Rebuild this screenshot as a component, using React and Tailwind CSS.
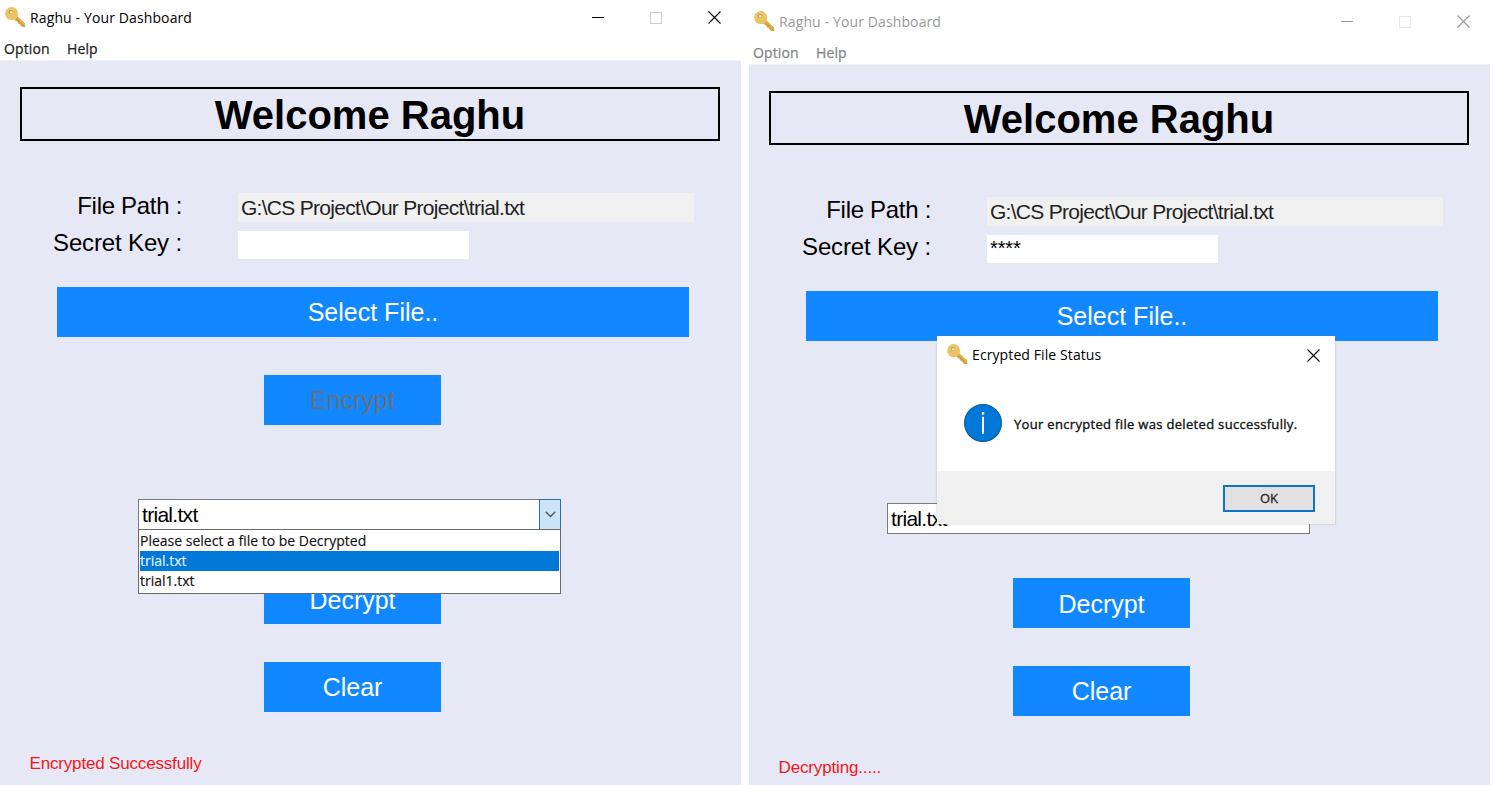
const UI = "font-['Open_Sans','Noto_Sans',sans-serif]";

function KeyIcon() {
  return (
    <svg className="block h-[21px] w-[21px] shrink-0" viewBox="0 0 21 21">
      <path d="M8.6 11.8 L11.8 8.8 L20.2 16.6 V20 H17.2 L15.4 18.4 V17.2 H14 L12.6 15.8 V14.6 H11.2 Z" fill="#deb04a" />
      <path d="M10.4 11 L19.8 19.8" stroke="#b98f3a" strokeWidth="1" />
      <circle cx="6.6" cy="6.6" r="6.5" fill="#ecc562" />
      <circle cx="5.9" cy="4.9" r="2" fill="#b8985a" />
      <circle cx="6.2" cy="5.3" r="1.2" fill="#f6f0dc" />
    </svg>
  );
}

function CloseIcon() {
  return (
    <svg className="block h-[13px] w-[13px]" viewBox="0 0 13 13">
      <path d="M0.5 0.5 L12.5 12.5 M12.5 0.5 L0.5 12.5" stroke="currentColor" strokeWidth="1.1" />
    </svg>
  );
}

function InfoIcon() {
  return (
    <svg className="block h-[38px] w-[38px] shrink-0" viewBox="0 0 38 38">
      <circle cx="19" cy="19" r="18.4" fill="#0078d7" stroke="#0b5ca8" strokeWidth="1.2" />
      <rect x="17.8" y="8" width="2.4" height="2.6" fill="#fff" />
      <rect x="18" y="12.8" width="2" height="17" fill="#fff" />
    </svg>
  );
}

function BlueButton({ children, className = "", disabled = false }) {
  return (
    <button
      type="button"
      className={`flex h-[50px] items-center justify-center bg-[#1188ff] text-[25px] leading-none ${disabled ? "text-[#68707c]" : "text-white"} ${className}`}
    >
      {children}
    </button>
  );
}

function Window({ active, secret, status, statusClass, children, className }) {
  return (
    <section className={`flex w-[741px] shrink-0 flex-col ${className}`}>
      <header className={`flex h-[36px] items-center pl-[5px] ${UI} ${active ? "text-black" : "text-[#999]"}`}>
        <div className="-mt-[2px]"><KeyIcon /></div>
        <h2 className="-mt-[2px] ml-[4px] flex-1 whitespace-nowrap text-[14px] tracking-[0.12px]">Raghu - Your Dashboard</h2>
        <div className="flex items-center pr-[20px]">
          <span className="-mt-px h-px w-[12px] bg-current" />
          <span className={`ml-[46px] h-[12px] w-[12px] border ${active ? "border-[#ccc]" : "border-[#e8e8e8]"}`} />
          <span className="-mt-px ml-[46px]"><CloseIcon /></span>
        </div>
      </header>
      <nav className={`flex h-[25px] items-center gap-[17.5px] border-b border-[#f0f0f2] pt-px pl-[4px] text-[14px] tracking-[0.1px] [-webkit-text-stroke:0.25px_currentColor] ${UI} ${active ? "text-[#222]" : "text-[#858585]"}`}>
        <span>Option</span>
        <span>Help</span>
      </nav>
      <main className="flex flex-1 flex-col bg-[#e6e8f5] pt-[26px] font-['Liberation_Sans',Arial,sans-serif]">
        <h1 className="mx-[20px] flex h-[54px] w-[700px] items-center justify-center border-2 border-black pt-px text-[40px] leading-none font-bold">
          Welcome Raghu
        </h1>
        <div className="mt-[52px] flex h-[29px]">
          <label className="w-[182px] text-right text-[24px] leading-[25px] tracking-[-0.3px]">File Path :</label>
          <div className="ml-[56px] flex w-[456px] items-center bg-[#f0f0f0] pl-[3px] text-[21px] leading-none tracking-[-0.71px] text-[#222]">
            G:\CS Project\Our Project\trial.txt
          </div>
        </div>
        <div className="mt-[9px] flex h-[28px]">
          <label className="w-[182px] text-right text-[24px] leading-[24px] tracking-[-0.15px]">Secret Key :</label>
          <div className="ml-[56px] w-[231px] bg-white pl-[3px] text-[20px] leading-[26px] tracking-[-0.1px]">{secret}</div>
        </div>
        <BlueButton className="mt-[28px] ml-[57px] w-[632px]">Select File..</BlueButton>
        <div className="mt-[37px] ml-[264px] h-[51px] pt-px">
          {active && <BlueButton className="w-[177px]" disabled>Encrypt</BlueButton>}
        </div>
        <div className="relative mt-[74px] ml-[138px] flex h-[31px] w-[423px] border border-[#7a7a7a] bg-white">
          <span className="flex-1 pl-[3px] text-[21px] leading-[30px] tracking-[-0.7px]">trial.txt</span>
          {children}
        </div>
        <BlueButton className="mt-[44px] ml-[264px] w-[177px] pt-[2px]">Decrypt</BlueButton>
        <BlueButton className="mt-[38px] ml-[264px] w-[177px]">Clear</BlueButton>
        <p className={`mt-[42px] ml-[29.5px] text-[17px] leading-[20px] text-[#f01820] ${statusClass}`}>{status}</p>
      </main>
    </section>
  );
}

function FileMenu() {
  return (
    <>
      <span className="-my-px -mr-px flex w-[22px] items-center justify-center border border-[#2a6da8] bg-[#cce4f7]">
        <svg className="h-[7px] w-[11px]" viewBox="0 0 11 7">
          <path d="M0.7 0.8 L5.5 5.6 L10.3 0.8" fill="none" stroke="#555" strokeWidth="1.4" />
        </svg>
      </span>
      <ul className={`absolute top-[29px] -left-px w-[423px] border border-[#6a6a6a] bg-white px-px pt-px pb-[2px] text-[14px] leading-[20px] text-[#111] [-webkit-text-stroke:0.15px_currentColor] ${UI}`}>
        <li>Please select a file to be Decrypted</li>
        <li className="bg-[#0078d7] text-[#e4f1ff]">trial.txt</li>
        <li>trial1.txt</li>
      </ul>
    </>
  );
}

function StatusDialog() {
  return (
    <div className={`absolute top-[336px] left-[937px] flex h-[188px] w-[398px] flex-col bg-white shadow-[0_0_1px_1px_rgba(120,120,150,0.15)] ${UI}`}>
      <div className="flex h-[38px] items-center pl-[10px]">
        <div className="-mt-[2px]"><KeyIcon /></div>
        <h3 className="-mt-[2px] ml-[4px] flex-1 text-[14px] tracking-[0.1px] text-black">Ecrypted File Status</h3>
        <span className="pr-[15px]"><CloseIcon /></span>
      </div>
      <div className="flex flex-1 items-center pl-[27px]">
        <InfoIcon />
        <p className="mt-[4px] ml-[12px] whitespace-nowrap text-[13px] tracking-[0.32px] text-[#111] [-webkit-text-stroke:0.35px_currentColor]">Your encrypted file was deleted successfully.</p>
      </div>
      <div className="flex h-[53px] items-center justify-end bg-[#f0f0f0] pt-px pr-[20px]">
        <button type="button" className="flex h-[27px] w-[92px] items-center justify-center border-2 border-[#0f74c8] bg-[#e1e1e1] pt-[2px] text-[13px] text-[#222] [-webkit-text-stroke:0.3px_currentColor]">OK</button>
      </div>
    </div>
  );
}

export default function App() {
  return (
    <div className="relative flex h-[785px] w-[1495px] gap-[8px] overflow-hidden bg-white text-black">
      <Window active secret="" status="Encrypted Successfully" statusClass="tracking-[-0.17px]" className="h-[785px]">
        <FileMenu />
      </Window>
      <Window active={false} secret="****" status="Decrypting....." statusClass="tracking-[-0.15px]" className="mt-[4px] h-[781px]" />
      <StatusDialog />
    </div>
  );
}
